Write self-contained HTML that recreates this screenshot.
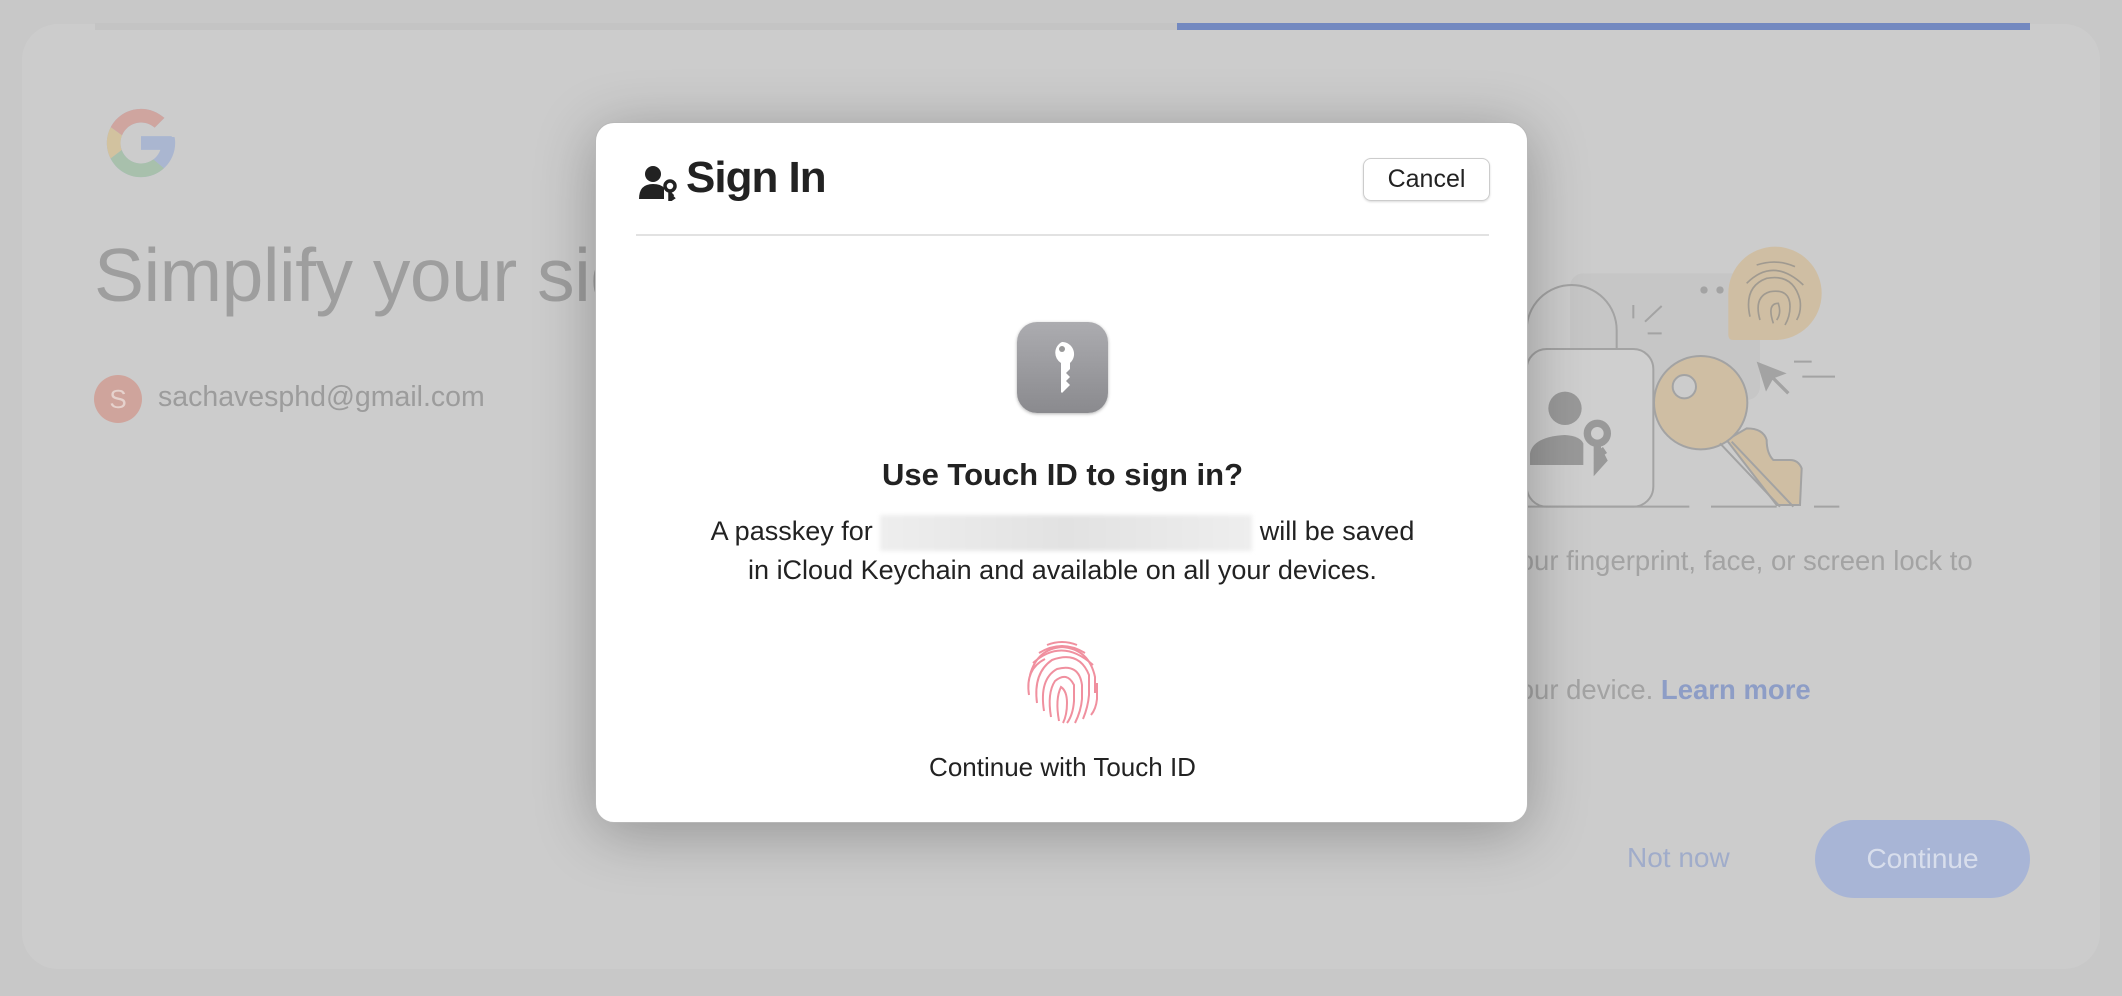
<!DOCTYPE html>
<html><head><meta charset="utf-8"><style>
*{margin:0;padding:0;box-sizing:border-box}
body{width:2122px;height:996px;background:#c8c8c8;position:relative;overflow:hidden;font-family:"Liberation Sans",sans-serif}
.card{position:absolute;left:22px;top:24px;width:2078px;height:945px;background:#cccccc;border-radius:36px}
.abs{position:absolute}
.modal{position:absolute;left:595px;top:122px;width:933px;height:701px;background:#fff;border-radius:19px;box-shadow:0 10px 60px rgba(0,0,0,.28);border:1px solid #b8b8b8}
</style></head><body>
<div class="card"></div>
<div class="abs" style="left:95px;top:23px;width:1082px;height:7px;background:#c4c4c4"></div>
<div class="abs" style="left:1177px;top:23px;width:853px;height:7px;background:#7389c0"></div>

<svg class="abs" style="left:100px;top:102px" width="82" height="82" viewBox="0 0 48 48">
<path fill="#aab6d0" d="M43.6 20.5H42V20H24v8h11.3c-1.6 4.7-6.1 8-11.3 8-6.6 0-12-5.4-12-12s5.4-12 12-12c3.1 0 5.8 1.2 8 3l5.7-5.7C34 6.1 29.3 4 24 4 13 4 4 13 4 24s9 20 20 20 20-9 20-20c0-1.3-.1-2.4-.4-3.5z"/>
<path fill="#cfa59f" d="M6.3 14.7l6.6 4.8C14.7 15.1 19 12 24 12c3.1 0 5.8 1.2 8 3l5.7-5.7C34 6.1 29.3 4 24 4 16.3 4 9.7 8.3 6.3 14.7z"/>
<path fill="#a8c0ac" d="M24 44c5.2 0 9.9-2 13.4-5.2l-6.2-5.2C29.2 35.1 26.7 36 24 36c-5.2 0-9.6-3.3-11.3-7.9l-6.5 5C9.5 39.6 16.2 44 24 44z"/>
<path fill="#d2c29f" d="M6.3 14.7l6.6 4.8C12.3 20.9 12 22.4 12 24s.3 3.1.7 4.1l-6.5 5C4.8 30.3 4 27.2 4 24s.8-6.5 2.3-9.3z"/>
</svg>
<div class="abs" style="left:94px;top:232px;font-size:75px;color:#9e9e9e;white-space:nowrap;letter-spacing:-0.5px">Simplify your sign</div>
<div class="abs" style="left:94px;top:375px;width:48px;height:48px;border-radius:50%;background:#cfa49c;color:#e6d2cd;font-size:26px;text-align:center;line-height:48px">S</div>
<div class="abs" style="left:158px;top:381px;font-size:28.5px;color:#9c9c9c">sachavesphd@gmail.com</div>
<div class="abs" style="left:1505px;top:545px;font-size:27.5px;color:#a3a3a3;white-space:nowrap">your fingerprint, face, or screen lock to</div>
<div class="abs" style="left:1505px;top:674px;font-size:27.5px;color:#a3a3a3;white-space:nowrap">your device. <span style="color:#8d9dc6;font-weight:bold">Learn more</span></div>
<div class="abs" style="left:1627px;top:842px;font-size:28px;color:#a0acca">Not now</div>
<div class="abs" style="left:1815px;top:820px;width:215px;height:78px;border-radius:39px;background:#a8b5d6;color:#d8deec;font-size:28px;text-align:center;line-height:78px">Continue</div>

<svg class="abs" style="left:1480px;top:220px" width="400" height="300" viewBox="0 0 1200 900" fill="none" stroke="#a3a3a3" stroke-width="6">
<rect x="270" y="160" width="570" height="380" rx="40" fill="#c6c6c6" stroke="none"/>
<path d="M140 390 V330 A135 135 0 0 1 410 330 V390"/>
<rect x="140" y="387" width="380" height="473" rx="60" fill="#cfcfcf"/>
<circle cx="255" cy="565" r="50" fill="#999" stroke="none"/>
<path d="M150 735 V700 Q160 650 255 645 Q300 648 310 670 V735Z" fill="#999" stroke="none"/>
<circle cx="352" cy="640" r="30" stroke="#999" stroke-width="22"/>
<path d="M352 665 V740 L370 720 L360 700 L375 690" stroke="#999" stroke-width="22"/>
<path d="M740 660 L890 855 L960 855 L965 745 Q955 720 930 720 L880 720 Q860 700 860 660 Q850 625 800 625 Z" fill="#cfbea3"/>
<circle cx="662" cy="548" r="140" fill="#cfbea3"/>
<circle cx="613" cy="500" r="35" fill="#cccccc"/>
<path d="M720 670 L900 860 M755 665 L940 860"/>
<path d="M885 80 A140 140 0 1 1 885 360 H760 Q745 360 745 345 V220 A140 140 0 0 1 885 80Z" fill="#cfbea3" stroke="none"/>
<g stroke="#a09a90" stroke-width="5"><path d="M830 135 Q890 115 945 140"/><path d="M800 190 Q880 110 970 195"/><path d="M810 290 Q790 200 860 175 Q940 160 960 240 Q965 275 950 300"/><path d="M840 300 Q820 230 870 215 Q930 205 930 260 Q930 290 915 315"/><path d="M880 310 Q860 250 895 250 Q905 280 890 300"/></g>
<circle cx="672" cy="210" r="11" fill="#a3a3a3" stroke="none"/><circle cx="720" cy="210" r="11" fill="#a3a3a3" stroke="none"/>
<path d="M830 425 L920 460 L880 475 L858 515Z" fill="#a3a3a3" stroke="none"/><path d="M880 475 L925 520" stroke-width="10"/>
<path d="M460 255 V295 M495 305 L545 258 M503 340 H545 M942 425 H995 M967 470 H1065 M0 860 H628 M693 860 H890 M1002 860 H1078"/>
</svg>

<div class="modal">
<svg class="abs" style="left:43px;top:42px" width="40" height="36" viewBox="0 0 40 36"><circle cx="14" cy="9" r="8" fill="#222"/><path d="M0 34 Q0 19 14 19 Q22 19 25 23 V34Z" fill="#222"/><circle cx="31" cy="21" r="5" fill="none" stroke="#222" stroke-width="3.5"/><path d="M31 25 V35 L34 33 L32 31 L34 29" stroke="#222" stroke-width="3.5" fill="none"/></svg>
<div class="abs" style="left:90px;top:30px;font-size:44px;font-weight:bold;color:#222;letter-spacing:-1px">Sign In</div>
<div class="abs" style="left:767px;top:35px;width:127px;height:43px;border:1px solid #ccc;border-radius:8px;box-shadow:0 1px 2px rgba(0,0,0,.15);font-size:25px;text-align:center;line-height:41px;color:#222">Cancel</div>
<div class="abs" style="left:40px;top:111px;width:853px;height:2px;background:#e2e2e2"></div>
<div class="abs" style="left:421px;top:199px;width:91px;height:91px;border-radius:20px;background:linear-gradient(#acacb0,#8a8a8e);box-shadow:0 1px 3px rgba(0,0,0,.3)">
<svg width="91" height="91" viewBox="0 0 91 91"><path d="M45 20 a12 12 0 0 1 8 21 V47 l-4 4 4 4 -4 4 4 4 -8 8 -1 -1 V41 a12 12 0 0 1 1-21z" fill="#fff"/><circle cx="45" cy="27" r="3" fill="#999"/></svg></div>
<div class="abs" style="left:0;top:332px;width:933px;text-align:center;font-size:31px;font-weight:bold;color:#222;line-height:40px">Use Touch ID to sign in?</div>
<div class="abs" style="left:0;top:389px;width:933px;text-align:center;font-size:27px;color:#222;line-height:38px">A passkey for <span style="display:inline-block;width:372px;height:36px;vertical-align:middle;background:linear-gradient(90deg,#eee,#e2e2e2 50%,#eee);filter:blur(2px)"></span> will be saved<br>in iCloud Keychain and available on all your devices.</div>
<svg class="abs" style="left:421px;top:512px" width="91" height="91" viewBox="0 0 91 91" fill="none" stroke="#f0909f" stroke-width="2">
<path d="M30 10 Q45 4 60 10"/><path d="M22 18 Q45 4 68 18"/><path d="M16 28 Q45 2 76 30"/><path d="M13 40 Q20 14 45 12 Q72 14 78 42 V58"/><path d="M12 60 Q8 34 28 24"/><path d="M80 48 V64 Q79 74 74 80"/><path d="M20 68 Q16 38 35 25 Q62 15 72 40 V60 Q71 72 66 84"/><path d="M27 76 Q22 44 40 34 Q62 28 65 50 V64 Q64 76 58 88"/><path d="M34 82 Q30 58 38 46 Q50 36 57 50 V66 Q56 80 50 88"/><path d="M42 86 Q38 64 44 52 Q50 56 50 68 Q50 80 46 88"/></svg>
<div class="abs" style="left:0;top:629px;width:933px;text-align:center;font-size:26px;color:#222">Continue with Touch ID</div>
</div>
</body></html>
